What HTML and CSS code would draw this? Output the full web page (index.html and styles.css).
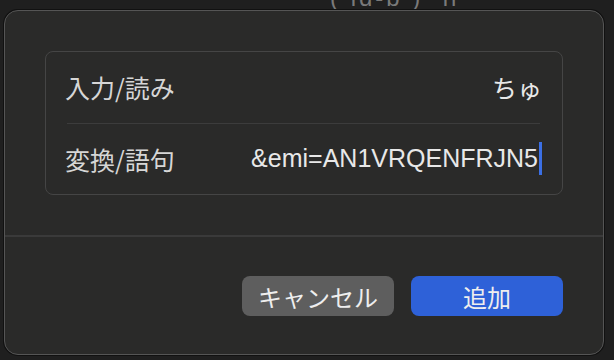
FILE: index.html
```html
<!DOCTYPE html>
<html lang="ja">
<head>
  <meta charset="UTF-8">
  <meta name="viewport" content="width=device-width, initial-scale=1.0">
  <title>単語登録</title>
  <link rel="stylesheet" href="styles.css">
</head>
<body>
  <div class="behind">( ld-b )  ll</div>
  <div class="dialog">
    <div class="dialog-body">
      <div class="group">
        <div class="row">
          <span class="label">入力/読み</span>
          <span class="value">ちゅ</span>
        </div>
        <div class="sep"></div>
        <div class="row">
          <span class="label">変換/語句</span>
          <span class="value">&amp;emi=AN1VRQENFRJN5<span class="caret"></span></span>
        </div>
      </div>
    </div>
    <div class="dialog-footer">
      <button class="btn btn-cancel">キャンセル</button>
      <button class="btn btn-add">追加</button>
    </div>
  </div>
</body>
</html>
```

FILE: styles.css
```css
body { margin: 0; background: #1f1f1f; font-family: "Noto Sans CJK JP", "Noto Sans", sans-serif; color: #dedede; height: 360px; overflow: hidden; position: relative; }
.behind { position: absolute; top: -16px; left: 330px; font-family: "Liberation Sans", sans-serif; font-size: 24px; color: #7a7a7a; white-space: pre; letter-spacing: 3px; }
.dialog { position: relative; margin: 10px 10px 0 4px; height: 345px; box-sizing: border-box; background: #2a2a29; border: 1px solid #555; border-radius: 14px; box-shadow: 0 0 0 1px #111; display: flex; flex-direction: column; }
.dialog-body { padding: 40px 40px 0 40px; height: 226px; box-sizing: border-box; border-bottom: 2px solid #3a3a3a; }
.group { height: 144px; box-sizing: border-box; border: 1px solid #454545; border-radius: 8px; padding: 0 20px 0 19px; display: flex; flex-direction: column; }
.row { flex: 1; display: flex; align-items: center; justify-content: space-between; font-size: 25px; }
.label { color: #d6d6d6; }
.value { color: #e8e8e8; display: flex; align-items: center; font-family: "Liberation Sans", "Noto Sans CJK JP", sans-serif; }
.caret { display: inline-block; width: 3px; height: 33px; background: #3b6fe4; margin-left: 1px; }
.sep { height: 1px; background: #3c3c3c; margin: 0 2px; }
.dialog-footer { flex: 1; display: flex; justify-content: flex-end; align-items: flex-start; gap: 17px; padding: 39px 40px 0 0; }
.btn { width: 152px; height: 40px; border: none; border-radius: 8px; font-family: inherit; font-size: 24px; color: #eee; padding: 0; }
.btn-cancel { background: #5e5e5e; }
.btn-add { background: #2e61d8; }
```
